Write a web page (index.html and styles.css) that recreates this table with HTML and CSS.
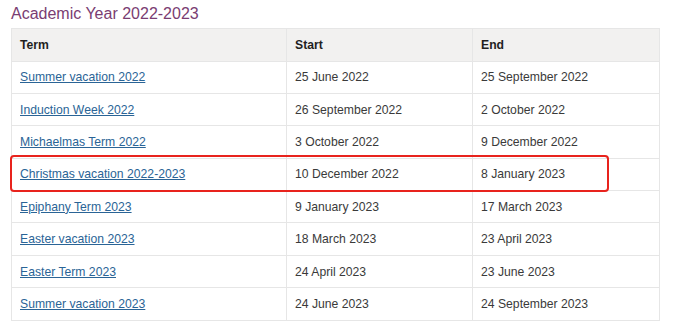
FILE: index.html
```html
<!DOCTYPE html>
<html>
<head>
<meta charset="utf-8">
<link rel="stylesheet" href="styles.css">
</head>
<body>
<div class="page">
  <h2 class="title">Academic Year 2022-2023</h2>
  <div class="table-wrap">
    <table class="terms">
      <thead>
        <tr><th class="c1">Term</th><th class="c2">Start</th><th class="c3">End</th></tr>
      </thead>
      <tbody>
        <tr><td><a href="#">Summer vacation 2022</a></td><td>25 June 2022</td><td>25 September 2022</td></tr>
        <tr><td><a href="#">Induction Week 2022</a></td><td>26 September 2022</td><td>2 October 2022</td></tr>
        <tr><td><a href="#">Michaelmas Term 2022</a></td><td>3 October 2022</td><td>9 December 2022</td></tr>
        <tr><td><a href="#">Christmas vacation 2022-2023</a></td><td>10 December 2022</td><td>8 January 2023</td></tr>
        <tr><td><a href="#">Epiphany Term 2023</a></td><td>9 January 2023</td><td>17 March 2023</td></tr>
        <tr><td><a href="#">Easter vacation 2023</a></td><td>18 March 2023</td><td>23 April 2023</td></tr>
        <tr><td><a href="#">Easter Term 2023</a></td><td>24 April 2023</td><td>23 June 2023</td></tr>
        <tr><td><a href="#">Summer vacation 2023</a></td><td>24 June 2023</td><td>24 September 2023</td></tr>
      </tbody>
    </table>
    <div class="highlight"></div>
  </div>
</div>
</body>
</html>
```
FILE: styles.css
```css
html, body {
  margin: 0;
  padding: 0;
  background: #ffffff;
}
.page {
  padding: 4px 0 0 11px;
  font-family: "Liberation Sans", Arial, sans-serif;
}
.title {
  margin: 0;
  font-size: 16px;
  font-weight: normal;
  color: #7a3d72;
  line-height: 20px;
  height: 24px;
}
.table-wrap {
  position: relative;
  width: 648px;
}
.terms {
  width: 648px;
  border-collapse: collapse;
  table-layout: fixed;
  font-size: 12.2px;
  color: #3a3a3a;
}
.terms th, .terms td {
  border: 1px solid #e6e6e6;
  text-align: left;
  padding: 0 0 0 8px;
  height: 32.4px;
  box-sizing: border-box;
}
.terms thead th {
  background: #f2f1f0;
  color: #1f1f1f;
  font-weight: bold;
  height: 32.5px;
}
.c1 { width: 275px; }
.c2 { width: 186px; }
.c3 { width: 187px; }
.terms a {
  color: #2a6496;
  text-decoration: underline;
}
.highlight {
  position: absolute;
  left: -1px;
  top: 127px;
  width: 595px;
  height: 33px;
  border: 2px solid #e8231d;
  border-radius: 4px;
  pointer-events: none;
}
```
